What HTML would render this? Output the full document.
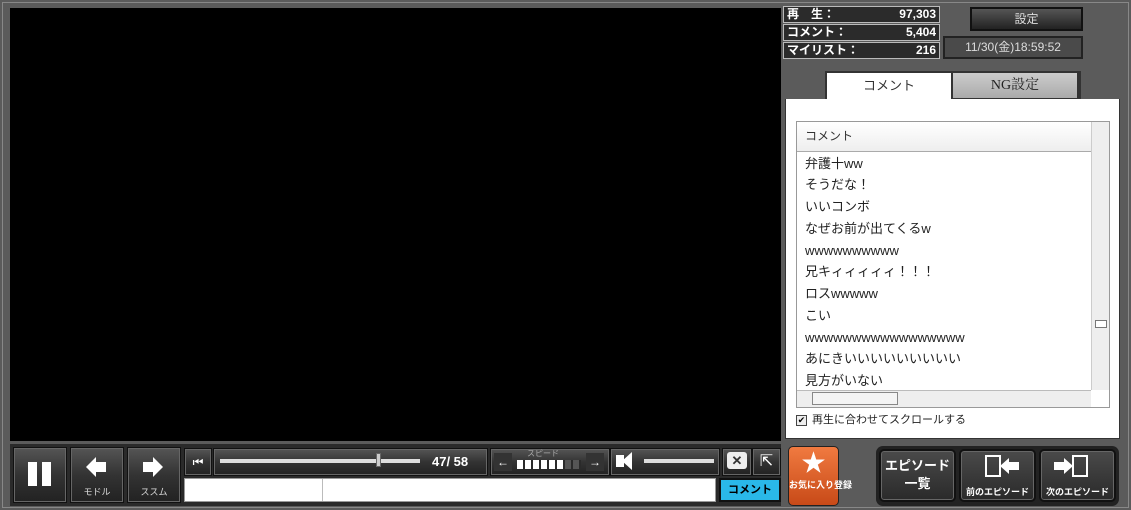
<!DOCTYPE html>
<html><head><meta charset="utf-8"><style>
*{margin:0;padding:0;box-sizing:border-box}
body{width:1131px;height:510px;background:#5b5b5b;position:relative;overflow:hidden;font-family:"Liberation Sans","Noto Sans CJK JP",sans-serif}
.a{position:absolute}
.frame{left:2px;top:2px;width:1127px;height:506px;border:1px solid #888}
.btn{background:linear-gradient(#555,#333 50%,#222);border:1px solid #111;box-shadow:inset 0 0 0 1px #666}
.st{left:783px;width:157px;height:17px;background:#2b2b2b;border:1px solid #bbb;color:#fff;font-weight:bold;font-size:12px;line-height:15px;padding:0 3px}
.st b{float:right}
.row{position:absolute;left:8px;font-size:13px;color:#222;height:21px;line-height:21px}
.ep{background:linear-gradient(#4a4a4a,#2a2a2a);border:2px solid #111;border-radius:5px;box-shadow:inset 0 0 0 1px #666;color:#fff;font-weight:bold;text-align:center}
</style></head><body>
<div class="a frame"></div>
<div class="a" style="left:10px;top:8px;width:771px;height:433px;background:#000"></div>

<div class="a st" style="top:6px">再　生：<b>97,303</b></div>
<div class="a st" style="top:24px">コメント：<b>5,404</b></div>
<div class="a st" style="top:42px">マイリスト：<b>216</b></div>
<div class="a" style="left:970px;top:7px;width:113px;height:24px;background:linear-gradient(#555,#222);border:2px solid #111;color:#ddd;font-size:12px;text-align:center;line-height:20px">設定</div>
<div class="a" style="left:943px;top:36px;width:140px;height:23px;background:#4a4a4a;border:2px solid #222;color:#ddd;font-size:12px;text-align:center;line-height:19px">11/30(金)18:59:52</div>

<div class="a" style="left:825px;top:71px;width:256px;height:28px;background:#333"></div>
<div class="a" style="left:827px;top:73px;width:124px;height:28px;background:#fff;font-size:13px;color:#333;text-align:center;line-height:26px">コメント</div>
<div class="a" style="left:953px;top:73px;width:124px;height:25px;background:linear-gradient(#ccc,#aaa);font-family:'Liberation Serif','Noto Serif CJK SC',serif;font-size:14px;color:#222;text-align:center;line-height:25px">NG設定</div>
<div class="a" style="left:785px;top:99px;width:335px;height:340px;background:#fff;border:1px solid #333;border-top:none"></div>

<div class="a" style="left:796px;top:121px;width:314px;height:287px;border:1px solid #999;background:#fff">
 <div class="a" style="left:0;top:0;width:294px;height:30px;background:linear-gradient(#fff,#eee);border-bottom:1px solid #aaa;font-size:12px;color:#333;line-height:28px;padding-left:8px">コメント</div>
 <div class="row" style="top:31px">弁護十ww</div>
 <div class="row" style="top:52px">そうだな！</div>
 <div class="row" style="top:74px">いいコンボ</div>
 <div class="row" style="top:96px">なぜお前が出てくるw</div>
 <div class="row" style="top:118px">wwwwwwwwww</div>
 <div class="row" style="top:139px">兄キィィィィィ！！！</div>
 <div class="row" style="top:161px">ロスwwwww</div>
 <div class="row" style="top:183px">こい</div>
 <div class="row" style="top:205px">wwwwwwwwwwwwwwwww</div>
 <div class="row" style="top:226px">あにきいいいいいいいいい</div>
 <div class="row" style="top:248px">見方がいない</div>
 <div class="a" style="left:294px;top:0;width:18px;height:268px;background:#eee;border-left:1px solid #ccc"></div>
 <div class="a" style="left:298px;top:198px;width:12px;height:8px;border:1px solid #777;background:#fff"></div>
 <div class="a" style="left:0;top:268px;width:294px;height:17px;background:#eee;border-top:1px solid #bbb"></div>
 <div class="a" style="left:15px;top:270px;width:86px;height:13px;border:1px solid #888;background:#f4f4f4"></div>
</div>
<div class="a" style="left:796px;top:415px;width:11px;height:11px;border:1px solid #444;background:#eee;font-size:9px;line-height:9px;text-align:center">✔</div>
<div class="a" style="left:812px;top:411px;font-size:11px;color:#222">再生に合わせてスクロールする</div>

<div class="a" style="left:10px;top:444px;width:771px;height:62px;background:#2a2a2a"></div>
<div class="a btn" style="left:13px;top:447px;width:54px;height:56px"></div>
<div class="a" style="left:28px;top:462px;width:9px;height:24px;background:#fff"></div>
<div class="a" style="left:42px;top:462px;width:9px;height:24px;background:#fff"></div>
<div class="a btn" style="left:70px;top:447px;width:54px;height:56px;color:#ddd;font-size:9px;text-align:center;padding-top:37px">モドル</div>
<div class="a" style="left:86px;top:457px;width:0;height:0;border:10px solid transparent;border-right:10px solid #fff;border-left:0"></div>
<div class="a" style="left:96px;top:462px;width:10px;height:10px;background:#fff"></div>
<div class="a btn" style="left:127px;top:447px;width:54px;height:56px;color:#ddd;font-size:9px;text-align:center;padding-top:37px">ススム</div>
<div class="a" style="left:143px;top:462px;width:10px;height:10px;background:#fff"></div>
<div class="a" style="left:153px;top:457px;width:0;height:0;border:10px solid transparent;border-left:10px solid #fff;border-right:0"></div>

<div class="a btn" style="left:184px;top:448px;width:28px;height:28px;color:#fff;font-size:12px;text-align:center;line-height:26px">⏮</div>
<div class="a btn" style="left:213px;top:448px;width:275px;height:28px"></div>
<div class="a" style="left:220px;top:459px;width:200px;height:4px;background:#ddd"></div>
<div class="a" style="left:376px;top:453px;width:5px;height:14px;background:#ccc;border:1px solid #666"></div>
<div class="a" style="left:432px;top:454px;color:#fff;font-weight:bold;font-size:13px">47/ 58</div>
<div class="a btn" style="left:490px;top:448px;width:120px;height:28px"></div>
<div class="a" style="left:494px;top:453px;width:18px;height:18px;background:#333;color:#fff;font-size:12px;text-align:center;line-height:18px">←</div>
<div class="a" style="left:586px;top:453px;width:18px;height:18px;background:#333;color:#fff;font-size:12px;text-align:center;line-height:18px">→</div>
<div class="a" style="left:527px;top:448px;color:#aaa;font-size:8px">スピード</div>
<div class="a" style="left:517px;top:460px;width:64px;height:9px;background:repeating-linear-gradient(90deg,#fff 0 6px,#2a2a2a 6px 8px)"></div>
<div class="a" style="left:565px;top:460px;width:16px;height:9px;background:repeating-linear-gradient(90deg,#555 0 6px,#2a2a2a 6px 8px)"></div>
<div class="a btn" style="left:610px;top:448px;width:110px;height:28px"></div>
<div class="a" style="left:616px;top:455px;width:8px;height:12px;background:#fff"></div>
<div class="a" style="left:622px;top:452px;border:9px solid transparent;border-right:10px solid #fff;border-left:0"></div>
<div class="a" style="left:644px;top:459px;width:70px;height:4px;background:#ddd"></div>
<div class="a btn" style="left:722px;top:448px;width:30px;height:28px"></div>
<div class="a" style="left:727px;top:452px;width:20px;height:17px;background:#eee;border-radius:3px;color:#333;font-weight:bold;font-size:13px;text-align:center;line-height:17px">✕</div>
<div class="a btn" style="left:752px;top:448px;width:29px;height:28px;color:#fff;font-size:16px;text-align:center;line-height:26px">⇱</div>

<div class="a" style="left:184px;top:478px;width:532px;height:24px;background:#fff;border:1px solid #999"></div>
<div class="a" style="left:322px;top:479px;width:1px;height:22px;background:#bbb"></div>
<div class="a" style="left:719px;top:478px;width:62px;height:24px;background:#2ab8e8;border:2px solid #111;color:#000;font-weight:bold;font-size:11px;text-align:center;line-height:20px">コメント</div>

<div class="a" style="left:788px;top:446px;width:51px;height:60px;background:linear-gradient(#f07a40,#c84a18);border:1px solid #222;border-radius:5px;color:#fff;font-weight:bold;font-size:9px;text-align:center;padding-top:3px;white-space:nowrap"><div style="font-size:24px;line-height:28px">★</div>お気に入り登録</div>
<div class="a" style="left:876px;top:446px;width:243px;height:60px;background:#222;border-radius:7px"></div>
<div class="a ep" style="left:879px;top:449px;width:77px;height:53px;font-size:13px;line-height:18px;padding-top:6px">エピソード<br>一覧</div>
<div class="a ep" style="left:959px;top:449px;width:77px;height:53px;font-size:9px;padding-top:34px">前のエピソード</div>
<div class="a" style="left:985px;top:455px;width:16px;height:22px;border:2px solid #fff"></div>
<div class="a" style="left:1000px;top:458px;border:8px solid transparent;border-right:9px solid #fff;border-left:0"></div>
<div class="a" style="left:1009px;top:462px;width:10px;height:8px;background:#fff"></div>
<div class="a ep" style="left:1039px;top:449px;width:77px;height:53px;font-size:9px;padding-top:34px">次のエピソード</div>
<div class="a" style="left:1072px;top:455px;width:16px;height:22px;border:2px solid #fff"></div>
<div class="a" style="left:1054px;top:462px;width:10px;height:8px;background:#fff"></div>
<div class="a" style="left:1064px;top:458px;border:8px solid transparent;border-left:9px solid #fff;border-right:0"></div>
</body></html>
